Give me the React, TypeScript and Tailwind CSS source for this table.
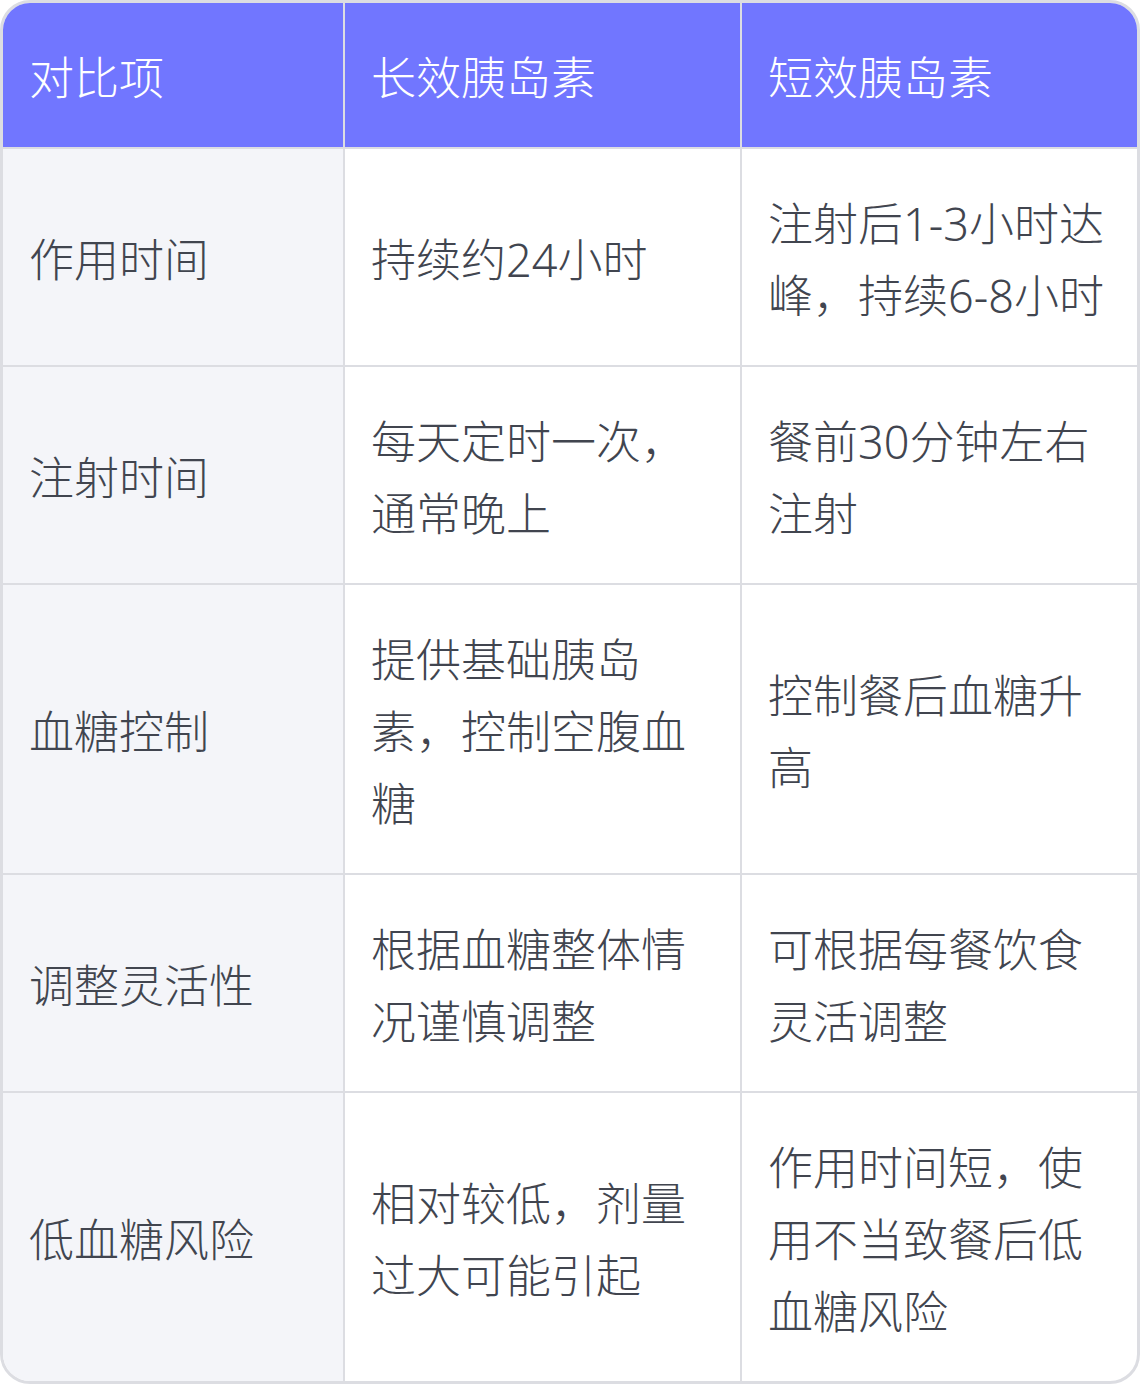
const rows: [string, string, string][] = [
  ['作用时间', '持续约24小时', '注射后1-3小时达峰，持续6-8小时'],
  ['注射时间', '每天定时一次，通常晚上', '餐前30分钟左右注射'],
  ['血糖控制', '提供基础胰岛素，控制空腹血糖', '控制餐后血糖升高'],
  ['调整灵活性', '根据血糖整体情况谨慎调整', '可根据每餐饮食灵活调整'],
  ['低血糖风险', '相对较低，剂量过大可能引起', '作用时间短，使用不当致餐后低血糖风险'],
]

const cell = 'pl-[26px] pr-7 pt-[39px] pb-[33px] text-left align-middle'

function App() {
  return (
    <div
      className="w-[1140px] h-[1384px] bg-white"
      style={{ fontFamily: '"Noto Sans", "Noto Sans CJK SC", sans-serif' }}
    >
      <div className="h-full overflow-hidden rounded-[30px] border-[3px] border-[#dcdde2]">
        <table className="w-full table-fixed border-collapse text-[45px] leading-[72px] font-light">
          <colgroup>
            <col className="w-[341px]" />
            <col className="w-[397px]" />
            <col />
          </colgroup>
          <thead>
            <tr className="bg-[#7176ff] text-white">
              <th className={`${cell} font-light`}>对比项</th>
              <th className={`${cell} font-light border-l-2 border-[#dcdde2]`}>长效胰岛素</th>
              <th className={`${cell} font-light border-l-2 border-[#dcdde2]`}>短效胰岛素</th>
            </tr>
          </thead>
          <tbody className="text-[#41454f]">
            {rows.map(([item, long, short]) => (
              <tr key={item} className="border-t-2 border-[#dcdde2]">
                <td className={`${cell} bg-[#f4f5f9]`}>{item}</td>
                <td className={`${cell} border-l-2 border-[#dcdde2]`}>{long}</td>
                <td className={`${cell} border-l-2 border-[#dcdde2]`}>{short}</td>
              </tr>
            ))}
          </tbody>
        </table>
      </div>
    </div>
  )
}

export default App
